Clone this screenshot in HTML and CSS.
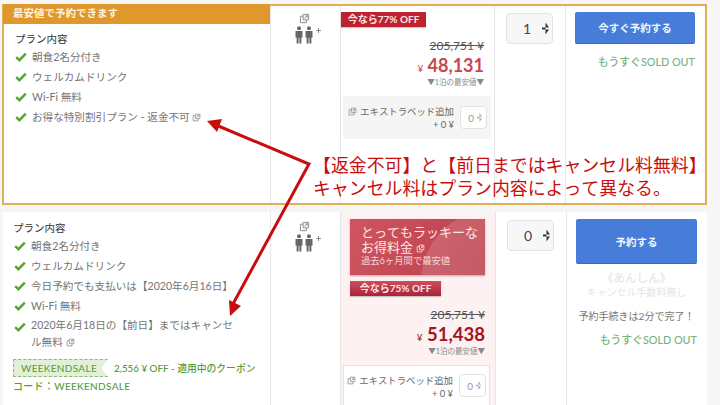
FILE: index.html
```html
<!DOCTYPE html>
<html lang="ja">
<head>
    <meta charset="UTF-8">
    <title>プラン比較</title>
    <link rel="stylesheet" href="styles.css">
</head>
<body>
    <svg width="0" height="0" class="defs">
        <symbol id="ext" viewBox="0 0 12 12"><path d="M4.5 1.5h6v6h-6zM4.5 3.5h-3v7h6.5v-3M6 6l3-3M7 3h2v2" fill="none" stroke="currentColor"/></symbol>
        <symbol id="check" viewBox="0 0 12 10"><path d="M1.2 5.2 4.4 8.2 10.8 1.6" fill="none" stroke="currentColor" stroke-width="2.4"/></symbol>
        <symbol id="guests" viewBox="0 0 26 18"><g fill="currentColor"><circle cx="4" cy="2.2" r="2"/><path d="M0.5 5h7v6.5H6.4V17.5H4.4V12h-0.8v5.5H1.6V11.5H0.5z"/><circle cx="14" cy="2.2" r="2"/><path d="M10.5 5h7v6.5h-1.1V17.5h-2V12h-0.8v5.5h-2V11.5h-1.1z"/></g><path d="M21 4.500h5M23.500 2v5" stroke="currentColor" stroke-width=".7" fill="none"/></symbol>
    </svg>

    <div class="page">
        <section class="room room-best">
            <div class="col-plan">
                <div class="best-head">最安値で予約できます</div>
                <div class="plan-body">
                    <h3>プラン内容</h3>
                    <ul class="features">
                        <li><svg class="check"><use href="#check"/></svg>朝食2名分付き</li>
                        <li><svg class="check"><use href="#check"/></svg>ウェルカムドリンク</li>
                        <li><svg class="check"><use href="#check"/></svg>Wi-Fi 無料</li>
                        <li><svg class="check"><use href="#check"/></svg><span>お得な特別割引プラン - 返金不可 <svg class="ext"><use href="#ext"/></svg></span></li>
                    </ul>
                </div>
            </div>
            <div class="col-guests">
                <svg class="ext ext-top"><use href="#ext"/></svg>
                <svg class="guests"><use href="#guests"/></svg>
            </div>
            <div class="col-price">
                <div class="off-tag">今なら77% OFF</div>
                <div class="price-box">
                    <div class="old-price">205,751 ¥</div>
                    <div class="new-price light"><small>¥</small> 48,131</div>
                    <div class="per-night">▼1泊の最安値▼</div>
                </div>
                <div class="extra">
                    <div class="extra-text"><svg class="ext"><use href="#ext"/></svg>エキストラベッド追加<br>+ 0 ¥</div>
                    <div class="mini-select">0<span class="arrows"></span></div>
                </div>
            </div>
            <div class="col-qty">
                <div class="qty">1<span class="arrows"></span></div>
            </div>
            <div class="col-book">
                <button class="book book-small">今すぐ予約する</button>
                <div class="soon">もうすぐSOLD OUT</div>
            </div>
        </section>

        <section class="room room-second">
            <div class="col-plan">
                <div class="plan-body">
                    <h3>プラン内容</h3>
                    <ul class="features">
                        <li><svg class="check"><use href="#check"/></svg>朝食2名分付き</li>
                        <li><svg class="check"><use href="#check"/></svg>ウェルカムドリンク</li>
                        <li><svg class="check"><use href="#check"/></svg>今日予約でも支払いは【2020年6月16日】</li>
                        <li><svg class="check"><use href="#check"/></svg>Wi-Fi 無料</li>
                        <li class="wrap"><svg class="check"><use href="#check"/></svg><span>2020年6月18日の【前日】まではキャンセル無料 <svg class="ext"><use href="#ext"/></svg></span></li>
                    </ul>
                    <div class="coupon">
                        <span class="coupon-tag">WEEKENDSALE</span>
                        <span>2,556 ¥ OFF - 適用中のクーポン</span>
                    </div>
                    <div class="coupon-code">コード：WEEKENDSALE</div>
                </div>
            </div>
            <div class="col-guests">
                <svg class="ext ext-top"><use href="#ext"/></svg>
                <svg class="guests"><use href="#guests"/></svg>
            </div>
            <div class="col-price col-price-pink">
                <div class="lucky">
                    <div class="lucky-title">とってもラッキーな<br>お得料金 <svg class="ext"><use href="#ext"/></svg></div>
                    <div class="lucky-sub">過去6ヶ月間で最安値</div>
                </div>
                <div class="off-tag off-tag-pink">今なら75% OFF</div>
                <div class="price-box">
                    <div class="old-price">205,751 ¥</div>
                    <div class="new-price"><small>¥</small> 51,438</div>
                    <div class="per-night">▼1泊の最安値▼</div>
                </div>
                <div class="extra extra-second">
                    <div class="extra-text"><svg class="ext"><use href="#ext"/></svg>エキストラベッド追加<br>+ 0 ¥</div>
                    <div class="mini-select">0<span class="arrows"></span></div>
                </div>
            </div>
            <div class="col-qty">
                <div class="qty">0<span class="arrows"></span></div>
            </div>
            <div class="col-book">
                <button class="book book-big">予約する</button>
                <div class="anshin">《あんしん》</div>
                <div class="anshin-sub">キャンセル手数料無し</div>
                <div class="two-min">予約手続きは2分で完了！</div>
                <div class="soon">もうすぐSOLD OUT</div>
            </div>
        </section>
    </div>

    <!-- annotation drawn over the screenshot -->
    <svg class="arrows-layer" width="720" height="405" viewBox="0 0 720 405">
        <path d="M216 125 309 164 233 304" fill="none" stroke="#c80d0d" stroke-width="3"/>
        <path d="M207 121 222 119 217 132z" fill="#c80d0d"/>
        <path d="M230 316 229 300 241 306z" fill="#c80d0d"/>
    </svg>
    <div class="note">【返金不可】と【前日まではキャンセル料無料】<br>キャンセル料はプラン内容によって異なる。</div>
</body>
</html>
```

FILE: styles.css
```css
* {
    box-sizing: border-box;
}
html, body {
    margin: 0;
    padding: 0;
}
body {
    width: 720px;
    height: 405px;
    overflow: hidden;
    position: relative;
    background-color: #f6f6f7;
    font-family: 'Lato', 'Noto Sans CJK JP', sans-serif;
    font-kerning: none;
    text-spacing-trim: space-all;
    color: #666;
}
.defs {
    position: absolute;
}
.page {
    width: 707px;
    padding: 4px 0 0 2px;
    display: flex;
    flex-direction: column;
    gap: 7px;
}
.room {
    display: grid;
    grid-template-columns: 266px 70px 154px 71px 1fr;
    background-color: #fff;
}
.room-best {
    height: 201px;
    border: 2px solid #e3ad55;
}
.room-best .col-plan {
    margin: -2px 0 0 -1px;
}
.room-second {
    height: 200px;
    margin-left: 1px;
    grid-template-columns: 267px 70px 155px 71px 1fr;
}
.col-guests, .col-price, .col-qty, .col-book {
    border-left: 1px solid #e6e6e6;
}
.col-plan {
    min-width: 0;
}
.best-head {
    height: 20px;
    padding: 2px 0 0 10px;
    background-color: #e0972c;
    color: #fdf3df;
    font-size: 10.500px;
    font-weight: bold;
    line-height: 15px;
}
.plan-body {
    padding: 8px 10px 0 11px;
}
.room-second .plan-body {
    padding: 9px 10px 0 10px;
}
.plan-body h3 {
    margin: 0 0 0 1px;
    font-size: 10.500px;
    font-weight: normal;
    color: #333;
    line-height: 15px;
}
.room-second .plan-body h3 {
    margin-left: 0;
}
.features {
    list-style: none;
    margin: 0;
    padding: 0;
}
.features li {
    display: flex;
    font-size: 10.600px;
    line-height: 20px;
    color: #757575;
}
.features li.wrap {
    line-height: 17px;
    padding-top: 1px;
}
.features li.wrap span {
    max-width: 205px;
}
.check {
    width: 12px;
    height: 10px;
    flex: none;
    margin: 5px 5px 0 1px;
    color: #58a335;
}
.ext {
    width: 9px;
    height: 9px;
    color: #888;
    vertical-align: -1px;
}
.coupon {
    display: flex;
    align-items: center;
    gap: 6px;
    margin-top: 8px;
    font-size: 9.800px;
    font-weight: 500;
    color: #5b9a35;
}
.coupon-tag {
    width: 95px;
    height: 18px;
    padding: 0 0 0 7px;
    background-color: #e3f0d8;
    border: 1px dashed #8cbb70;
    border-right: 0;
    clip-path: polygon(0 0, 100% 0, 93% 50%, 100% 100%, 0 100%);
    font-size: 10px;
    font-weight: normal;
    line-height: 16px;
    letter-spacing: .3px;
    white-space: nowrap;
}
.coupon-code {
    margin-top: 2px;
    font-size: 10px;
    line-height: 14px;
    font-weight: 500;
    letter-spacing: .3px;
    color: #5b9a35;
}
.col-guests {
    display: flex;
    flex-direction: column;
    align-items: center;
    padding: 7px 2px 0 0;
}
.room-second .col-guests {
    padding-top: 9px;
}
.ext-top {
    width: 11px;
    height: 11px;
    margin-bottom: 2px;
}
.guests {
    width: 26px;
    height: 18px;
    color: #666;
    margin-left: 6px;
}
.col-price {
    padding-top: 6px;
}
.col-price-pink {
    background-color: #fdf1f1;
    padding-top: 7px;
}
.off-tag {
    width: 85px;
    height: 15px;
    background-color: #be2230;
    color: #fbe4e4;
    font-size: 10px;
    font-weight: bold;
    line-height: 15px;
    text-align: center;
    box-shadow: 0 1px 1px rgba(0, 0, 0, .2);
}
.off-tag-pink {
    width: 91px;
    margin: 6px 0 0 9px;
    background: linear-gradient(#cf4d5a, #a8243a);
}
.lucky {
    height: 56px;
    margin: 0 10px 0 9px;
    padding: 6px 0 0 11px;
    background:
        radial-gradient(circle at 105% 110%, rgba(255, 255, 255, .14) 45%, transparent 46%),
        linear-gradient(120deg, #cf5560, #bb3f4c);
    color: #fbeaea;
    box-shadow: 0 1px 2px rgba(0, 0, 0, .3);
}
.lucky-title {
    font-size: 13px;
    line-height: 15px;
}
.lucky-title .ext {
    color: #fbeaea;
}
.lucky-sub {
    font-size: 9.300px;
    line-height: 12px;
    opacity: .85;
}
.price-box {
    padding: 11px 10px 0 0;
    text-align: right;
}
.old-price {
    font-size: 12px;
    line-height: 15px;
    color: #555;
    text-decoration: line-through;
}
.new-price {
    margin-top: 2px;
    font-size: 18.500px;
    line-height: 20px;
    font-weight: bold;
    color: #a3141f;
}
.new-price.light {
    font-size: 18px;
    color: #c8474c;
}
.new-price small {
    font-size: 10px;
    font-weight: normal;
}
.per-night {
    font-size: 7.500px;
    line-height: 10px;
    color: #888;
}
.extra {
    display: flex;
    justify-content: flex-end;
    align-items: center;
    gap: 6px;
    height: 43px;
    margin: 8px 3px 0 2px;
    padding-right: 4px;
    background-color: #f5f5f6;
}
.extra-second {
    margin-right: 5px;
    border: 1px solid #e3e3e3;
    background-color: #fff;
    height: 50px;
    padding-right: 3px;
    padding-top: 8px;
    align-items: flex-start;
}
.extra-text {
    font-size: 9.400px;
    line-height: 13px;
    text-align: right;
    white-space: nowrap;
    color: #666;
}
.extra-text .ext {
    margin-right: 3px;
}
.mini-select {
    display: flex;
    align-items: center;
    justify-content: flex-end;
    gap: 3px;
    width: 27px;
    height: 23px;
    padding-right: 4px;
    border: 1px solid #e2e2e2;
    border-radius: 4px;
    background-color: #fff;
    color: #999;
    font-size: 10px;
}
.arrows {
    width: 5px;
    height: 9px;
    flex: none;
    background-color: #555;
    clip-path: polygon(50% 0, 100% 42%, 0 42%, 0 58%, 100% 58%, 50% 100%);
}
.mini-select .arrows {
    background-color: #aaa;
}
.col-qty {
    padding: 7px 0 0 11px;
}
.room-second .col-qty {
    padding-top: 8px;
}
.qty {
    display: flex;
    align-items: center;
    justify-content: space-between;
    width: 47px;
    height: 31px;
    padding: 0 3px 0 16px;
    background-color: #f7f7f8;
    border: 1px solid #e3e3e3;
    border-radius: 4px;
    color: #444;
    font-size: 14px;
}
.qty .arrows {
    width: 7px;
    height: 12px;
    background-color: #333;
}
.col-book {
    padding: 6px 10px 0 9px;
    text-align: right;
}
.room-second .col-book {
    padding-top: 7px;
}
.book {
    display: block;
    width: 100%;
    border: 0;
    border-bottom: 1px solid #3a6bb8;
    border-radius: 2px;
    background-color: #477dd8;
    color: #f2f6fd;
    font-family: inherit;
    font-size: 10.500px;
    font-weight: bold;
}
.book-small {
    height: 32px;
}
.book-big {
    height: 45px;
}
.soon {
    margin-top: 10px;
    font-size: 10.800px;
    line-height: 15px;
    font-weight: 500;
    color: #74b47f;
}
.room-second .soon {
    margin-top: 9px;
}
.anshin {
    margin-top: 6px;
    text-align: center;
    font-size: 11.500px;
    line-height: 15px;
    color: #e2e2e2;
}
.anshin-sub {
    text-align: center;
    font-size: 10px;
    line-height: 14px;
    color: #e6e6e6;
}
.two-min {
    margin-top: 10px;
    text-align: center;
    font-size: 10px;
    line-height: 14px;
    color: #777;
}
.arrows-layer {
    position: absolute;
    left: 0;
    top: 0;
}
.note {
    position: absolute;
    left: 313px;
    top: 153px;
    width: 400px;
    font-family: 'Noto Sans CJK JP', sans-serif;
    font-size: 17.900px;
    line-height: 23px;
    color: #c80d0d;
    white-space: nowrap;
}
```
